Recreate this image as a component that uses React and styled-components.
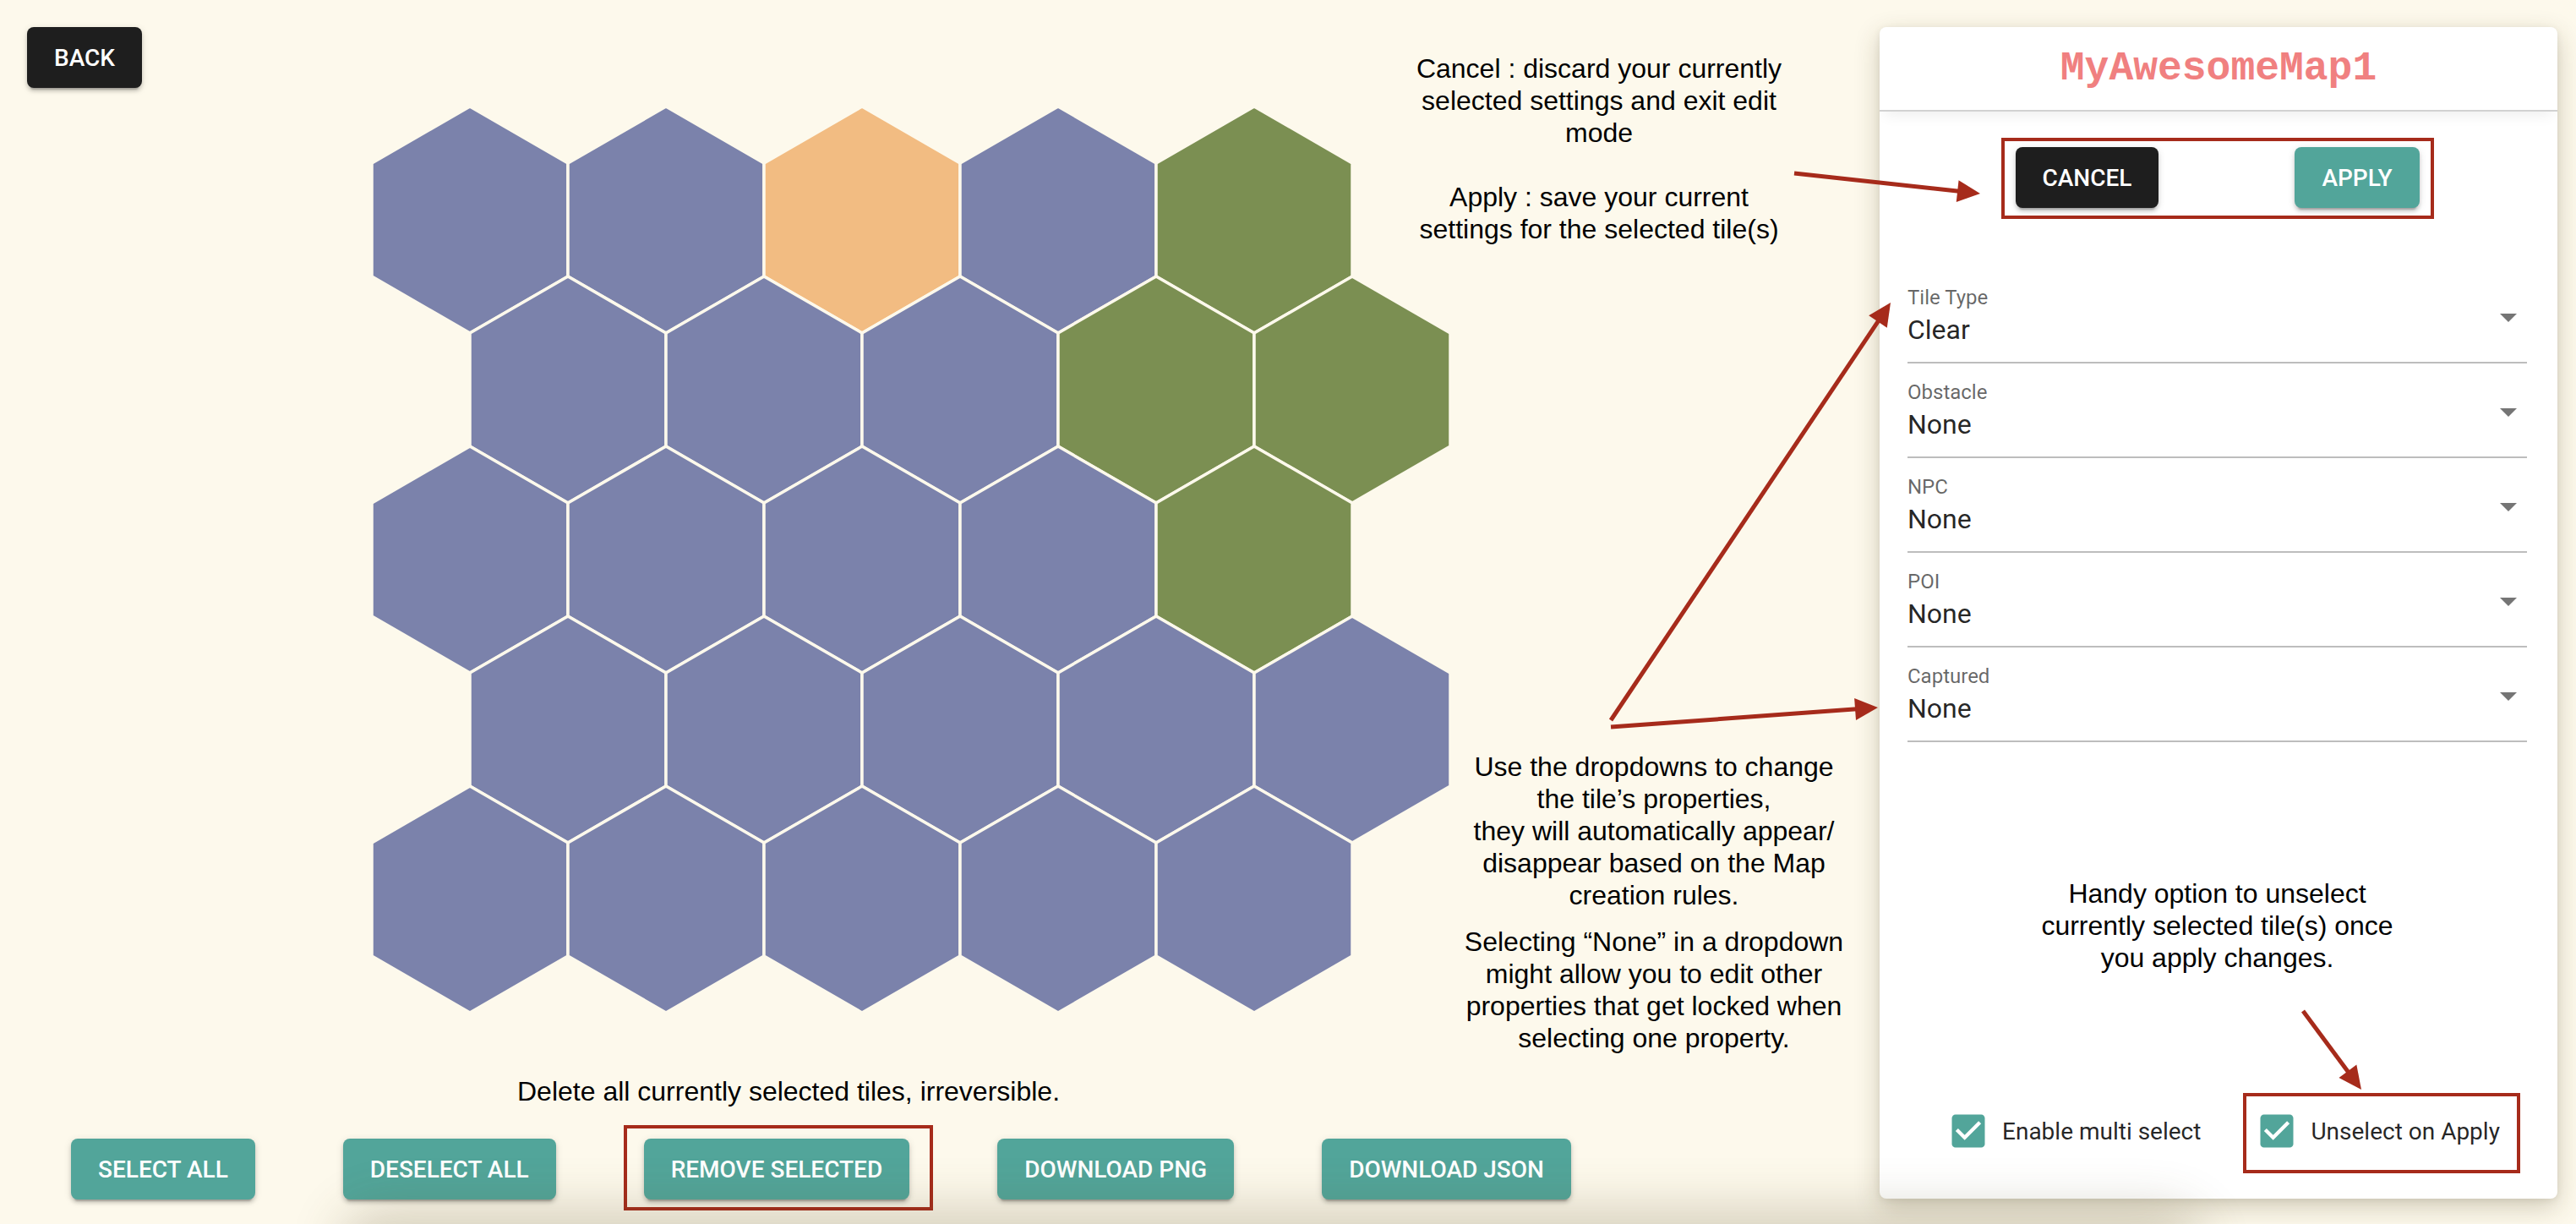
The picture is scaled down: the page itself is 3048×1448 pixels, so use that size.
import React from 'react';
import styled, { createGlobalStyle } from 'styled-components';

const BG = '#fdf9ec';
const TEAL = '#52a59a';
const DARK = '#1e1e1e';
const ANNOT = '#a62b1b';

const GlobalStyle = createGlobalStyle`
  html, body { margin: 0; padding: 0; background: ${BG}; }
  body { font-family: Roboto, "Liberation Sans", Arial, sans-serif; }
  *, *::before, *::after { box-sizing: border-box; }
`;

const Page = styled.div`
  position: relative;
  width: 3048px;
  height: 1448px;
  overflow: hidden;
  display: flex;
  align-items: flex-start;
  background: ${BG};
  &::after {
    content: '';
    position: absolute;
    left: 420px;
    right: 460px;
    top: 100%;
    height: 60px;
    border-radius: 60px;
    box-shadow: 0 0 60px 18px rgba(90, 80, 40, 0.24);
  }
`;

const LeftColumn = styled.main`
  flex: 0 0 2224px;
  padding: 32px 0 0 32px;
  display: flex;
  flex-direction: column;
  align-items: flex-start;
`;

const Button = styled.button`
  height: 72px;
  padding: 0 32px;
  border: none;
  border-radius: 8px;
  background: ${(p) => (p.$dark ? DARK : TEAL)};
  color: #fff;
  font-family: Roboto, "Liberation Sans", sans-serif;
  font-weight: 500;
  font-size: 28px;
  letter-spacing: 0;
  text-transform: uppercase;
  display: inline-flex;
  align-items: center;
  justify-content: center;
  white-space: nowrap;
  box-shadow: 0 6px 2px -4px rgba(0, 0, 0, 0.2), 0 4px 4px 0 rgba(0, 0, 0, 0.14),
    0 2px 10px 0 rgba(0, 0, 0, 0.12);
  cursor: pointer;
`;

const MapSvg = styled.svg`
  display: block;
  margin: 18px 0 0 404px;
`;

const Note = styled.p`
  margin: 68px 0 0 401px;
  width: 1000px;
  text-align: center;
  font-family: "Liberation Sans", Arial, sans-serif;
  font-size: 32px;
  line-height: 38px;
  color: #000;
`;

const ButtonRow = styled.div`
  margin: 37px 0 0 52px;
  display: flex;
  align-items: center;
  gap: 104px;
`;

const Highlight = styled.div`
  position: relative;
  display: inline-flex;
  &::after {
    content: '';
    position: absolute;
    top: ${(p) => -p.$t}px;
    right: ${(p) => -p.$r}px;
    bottom: ${(p) => -p.$b}px;
    left: ${(p) => -p.$l}px;
    border: 4px solid ${ANNOT};
    pointer-events: none;
  }
`;

const Card = styled.aside`
  flex: 0 0 802px;
  height: 1386px;
  margin-top: 32px;
  background: #fff;
  border-radius: 8px;
  box-shadow: 0 10px 30px rgba(70, 60, 20, 0.24), 0 2px 8px rgba(0, 0, 0, 0.08);
  display: flex;
  flex-direction: column;
  overflow: hidden;
`;

const CardHeader = styled.header`
  position: relative;
  z-index: 1;
  height: 100px;
  border-bottom: 2px solid #d2d2d2;
  box-shadow: 0 10px 16px -6px rgba(0, 0, 0, 0.07);
  display: flex;
  align-items: center;
  justify-content: center;
`;

const Title = styled.h1`
  margin: 0;
  font-family: "Liberation Mono", "Courier New", monospace;
  font-weight: 700;
  font-size: 48px;
  color: #f08080;
  letter-spacing: 0;
`;

const CardBody = styled.div`
  padding: 0 36px 0 33px;
  display: flex;
  flex-direction: column;
`;

const ActionBox = styled.div`
  align-self: center;
  width: 512px;
  margin-top: 31px;
  border: 4px solid ${ANNOT};
  padding: 7px 13px 9px;
  display: flex;
  justify-content: space-between;
`;

const FieldList = styled.div`
  margin-top: 79px;
  display: flex;
  flex-direction: column;
  gap: 20px;
`;

const Field = styled.div`
  display: flex;
  align-items: center;
  padding-bottom: 15px;
  border-bottom: 2px solid #bdbdbd;
`;

const FieldText = styled.div`
  flex: 1;
  display: flex;
  flex-direction: column;
`;

const FieldLabel = styled.span`
  font-size: 24px;
  line-height: 28px;
  color: rgba(0, 0, 0, 0.6);
`;

const FieldValue = styled.span`
  margin-top: 1px;
  font-size: 32px;
  line-height: 46px;
  color: rgba(0, 0, 0, 0.87);
`;

const DropArrow = styled.svg`
  margin-right: 12px;
  flex: none;
`;

const CardNote = styled.p`
  margin: 160px 0 0;
  text-align: center;
  font-family: "Liberation Sans", Arial, sans-serif;
  font-size: 32px;
  line-height: 38px;
  color: #000;
`;

const CheckRow = styled.div`
  margin-top: 160px;
  padding-left: 46px;
  display: flex;
  align-items: center;
  gap: 64px;
`;

const CheckLabel = styled.label`
  display: flex;
  align-items: center;
  gap: 14px;
  font-size: 28px;
  color: rgba(0, 0, 0, 0.87);
  white-space: nowrap;
`;

const Callout = styled.div`
  position: absolute;
  top: ${(p) => p.$top}px;
  left: ${(p) => p.$left}px;
  width: ${(p) => p.$width}px;
  text-align: center;
  font-family: "Liberation Sans", Arial, sans-serif;
  font-size: 32px;
  line-height: 38px;
  color: #000;
  white-space: nowrap;
  & p {
    margin: 0;
  }
  & p + p {
    margin-top: ${(p) => p.$gap}px;
  }
`;

const Overlay = styled.svg`
  position: absolute;
  left: 0;
  top: 0;
  pointer-events: none;
  z-index: 5;
`;

/* ---------- data ---------- */
const PURPLE = '#7b82ab';
const ORANGE = '#f2bc82';
const GREEN = '#7b8f52';
const C = { P: PURPLE, O: ORANGE, G: GREEN };
const GRID = ['PPOPG', 'PPPGG', 'PPPPG', 'PPPPP', 'PPPPP'];

const HW = 116;
const R = 134;

function hexPoints(cx, cy) {
  return [
    [cx, cy - R],
    [cx + HW, cy - R / 2],
    [cx + HW, cy + R / 2],
    [cx, cy + R],
    [cx - HW, cy + R / 2],
    [cx - HW, cy - R / 2],
  ]
    .map((p) => p.join(','))
    .join(' ');
}

function HexMap() {
  const tiles = [];
  GRID.forEach((row, r) => {
    row.split('').forEach((k, i) => {
      const cx = (r % 2 === 0 ? 120 : 236) + 232 * i;
      const cy = 138 + 201 * r;
      tiles.push(
        <polygon
          key={`${r}-${i}`}
          points={hexPoints(cx, cy)}
          fill={C[k]}
          stroke={BG}
          strokeWidth="3.5"
        />
      );
    });
  });
  return (
    <MapSvg width="1290" height="1082" viewBox="0 0 1290 1082">
      {tiles}
    </MapSvg>
  );
}

function Arrow({ x1, y1, x2, y2 }) {
  const dx = x2 - x1;
  const dy = y2 - y1;
  const d = Math.hypot(dx, dy);
  const ux = dx / d;
  const uy = dy / d;
  const len = 27;
  const hw = 13;
  const bx = x2 - ux * len;
  const by = y2 - uy * len;
  const pts = [
    [x2, y2],
    [bx - uy * hw, by + ux * hw],
    [bx + uy * hw, by - ux * hw],
  ]
    .map((p) => p.join(','))
    .join(' ');
  return (
    <g>
      <line x1={x1} y1={y1} x2={bx + ux * 2} y2={by + uy * 2} stroke={ANNOT} strokeWidth="5" />
      <polygon points={pts} fill={ANNOT} />
    </g>
  );
}

const FIELDS = [
  ['Tile Type', 'Clear'],
  ['Obstacle', 'None'],
  ['NPC', 'None'],
  ['POI', 'None'],
  ['Captured', 'None'],
];

function CheckIcon() {
  return (
    <svg width="52" height="52" viewBox="0 0 24 24">
      <path
        fill={TEAL}
        d="M19 3H5c-1.11 0-2 .9-2 2v14c0 1.1.89 2 2 2h14c1.11 0 2-.9 2-2V5c0-1.1-.89-2-2-2z"
      />
      <path fill="#fff" d="M10 17l-5-5 1.41-1.41L10 14.17l7.59-7.59L19 8l-9 9z" />
    </svg>
  );
}

export default function App() {
  return (
    <>
      <GlobalStyle />
      <Page>
        <LeftColumn>
          <Button $dark>Back</Button>
          <HexMap />
          <Note>Delete all currently selected tiles, irreversible.</Note>
          <ButtonRow>
            <Button>Select all</Button>
            <Button>Deselect all</Button>
            <Highlight $t={16} $r={28} $b={13} $l={24}>
              <Button>Remove selected</Button>
            </Highlight>
            <Button>Download PNG</Button>
            <Button>Download JSON</Button>
          </ButtonRow>
        </LeftColumn>

        <Card>
          <CardHeader>
            <Title>MyAwesomeMap1</Title>
          </CardHeader>
          <CardBody>
            <ActionBox>
              <Button $dark>Cancel</Button>
              <Button>Apply</Button>
            </ActionBox>
            <FieldList>
              {FIELDS.map(([label, value]) => (
                <Field key={label}>
                  <FieldText>
                    <FieldLabel>{label}</FieldLabel>
                    <FieldValue>{value}</FieldValue>
                  </FieldText>
                  <DropArrow width="20" height="10" viewBox="0 0 20 10">
                    <polygon points="0,0 20,0 10,10" fill="#757575" />
                  </DropArrow>
                </Field>
              ))}
            </FieldList>
            <CardNote>
              Handy option to unselect
              <br />
              currently selected tile(s) once
              <br />
              you apply changes.
            </CardNote>
            <CheckRow>
              <CheckLabel>
                <CheckIcon />
                Enable multi select
              </CheckLabel>
              <Highlight $t={19} $r={24} $b={24} $l={14}>
                <CheckLabel>
                  <CheckIcon />
                  Unselect on Apply
                </CheckLabel>
              </Highlight>
            </CheckRow>
          </CardBody>
        </Card>

        <Callout $top={62} $left={1632} $width={520} $gap={38}>
          <p>
            Cancel : discard your currently
            <br />
            selected settings and exit edit
            <br />
            mode
          </p>
          <p>
            Apply : save your current
            <br />
            settings for the selected tile(s)
          </p>
        </Callout>

        <Callout $top={888} $left={1687} $width={540} $gap={17}>
          <p>
            Use the dropdowns to change
            <br />
            the tile’s properties,
            <br />
            they will automatically appear/
            <br />
            disappear based on the Map
            <br />
            creation rules.
          </p>
          <p>
            Selecting “None” in a dropdown
            <br />
            might allow you to edit other
            <br />
            properties that get locked when
            <br />
            selecting one property.
          </p>
        </Callout>

        <Overlay width="3048" height="1448" viewBox="0 0 3048 1448">
          <Arrow x1={2123} y1={205} x2={2343} y2={229} />
          <Arrow x1={1906} y1={852} x2={2237} y2={358} />
          <Arrow x1={1906} y1={860} x2={2222} y2={837} />
          <Arrow x1={2725} y1={1196} x2={2794} y2={1289} />
        </Overlay>
      </Page>
    </>
  );
}
